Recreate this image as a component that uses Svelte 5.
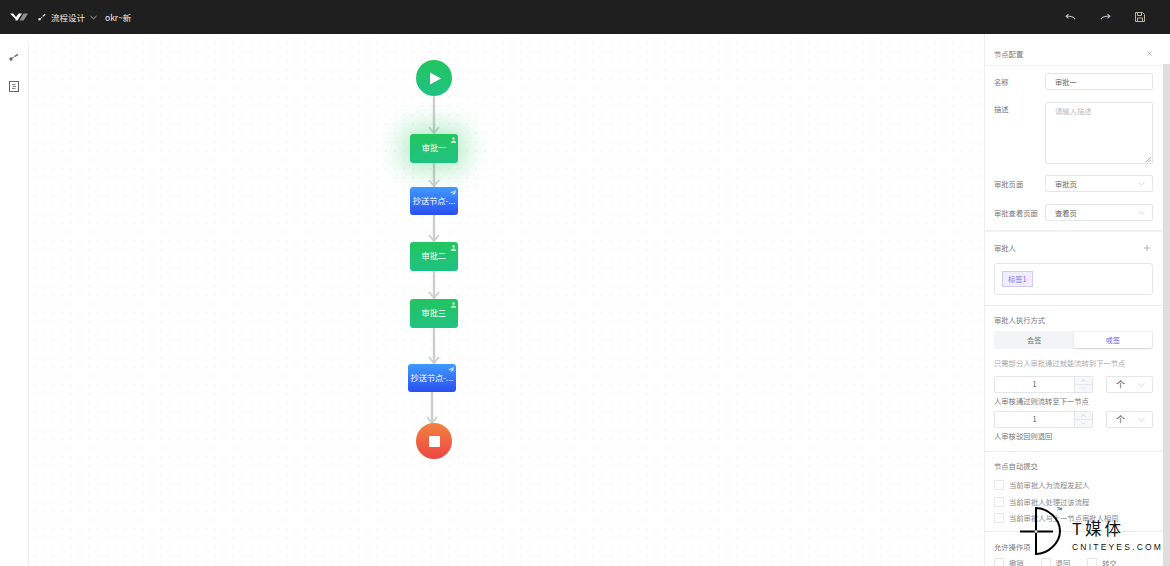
<script>
	const nodes = [
		{ label: '审批一', x: 410, y: 134, w: 48, h: 29, type: 'approve', glow: true },
		{ label: '抄送节点-...', x: 410, y: 187, w: 48, h: 28, type: 'copy' },
		{ label: '审批二', x: 409.5, y: 242, w: 48.5, h: 29, type: 'approve' },
		{ label: '审批三', x: 409.5, y: 299, w: 48.5, h: 29, type: 'approve' },
		{ label: '抄送节点-...', x: 407.5, y: 364, w: 48.5, h: 28, type: 'copy' }
	];

	const edges = [
		{ x: 434, y1: 96, y2: 134 },
		{ x: 434, y1: 163, y2: 187 },
		{ x: 434, y1: 215, y2: 242 },
		{ x: 434, y1: 271, y2: 299 },
		{ x: 434, y1: 328, y2: 364 },
		{ x: 432, y1: 392, y2: 424 }
	];

	const autoSubmit = ['当前审批人为流程发起人', '当前审批人处理过该流程', '当前审批人与上一节点审批人相同'];
	const actions = ['撤销', '退回', '转交'];
</script>

<div class="page">
	<header class="topbar">
		<svg class="logo" viewBox="0 0 18 8" width="18" height="8">
			<path d="M0 .5H3.200L6 4 7.300 2.300 8.800 .5H12L7.400 7.500H5.200L5.800 6.600z" fill="#fff" />
			<path d="M13.500 .5H18L13.600 7.500H9.400z" fill="#8f8f8f" />
		</svg>
		<svg class="flow-icon" viewBox="0 0 8 8" width="8" height="8">
			<path d="M2 5.800 4.600 3.800" stroke="#bbb" stroke-width="1" />
			<path d="M5 3.300 7.200 1.200" stroke="#ddd" stroke-width="1.400" />
			<circle cx="1.500" cy="6.300" r="1.200" fill="#ddd" />
		</svg>
		<span class="title">流程设计</span>
		<svg class="chev" viewBox="0 0 8 5" width="7" height="5">
			<path d="M.5.800 4 4 7.500.800" fill="none" stroke="#ccc" stroke-width=".9" />
		</svg>
		<span class="name">okr~新</span>
		<div class="actions">
			<svg viewBox="0 0 12 8" width="11" height="8">
				<path d="M11 6.500C9.500 3.500 6 2.800 1.500 3.300M3.800 1 1.200 3.300 3.800 5.500" fill="none" stroke="#b5bcc4" stroke-width="1.200" />
			</svg>
			<svg viewBox="0 0 12 8" width="11" height="8">
				<path d="M1 6.500C2.500 3.500 6 2.800 10.500 3.300M8.200 1l2.600 2.300-2.600 2.200" fill="none" stroke="#b5bcc4" stroke-width="1.200" />
			</svg>
			<svg viewBox="0 0 10 10" width="10" height="10">
				<path d="M.5.500H7.500L9.500 2.500V9.500H.5z" fill="none" stroke="#b9b5a0" stroke-width="1" />
				<path d="M2.500.500V3.500H6.500V.500M2.500 9.500V6H7.500V9.500" fill="none" stroke="#b9b5a0" stroke-width="1" />
			</svg>
		</div>
	</header>

	<div class="body">
		<aside class="rail">
			<svg viewBox="0 0 10 8" width="10" height="8">
				<path d="M2 5.800 5 4" stroke="#777" stroke-width="1" />
				<path d="M5.500 3.600 9 1.400" stroke="#666" stroke-width="1.500" />
				<circle cx="2" cy="6" r="1.700" fill="#666" />
			</svg>
			<svg viewBox="0 0 10 11" width="10" height="11">
				<rect x=".5" y=".5" width="9" height="10" fill="none" stroke="#666" />
				<path d="M3 3.500h3.500M3.500 5.500h3.500M3 7.500h3.500" stroke="#666" stroke-width=".8" />
			</svg>
		</aside>

		<main class="canvas">
			<svg class="edges" width="1170" height="566">
				{#each edges as e}
					<line x1={e.x} y1={e.y1} x2={e.x} y2={e.y2} stroke="#cdcdcd" stroke-width="2.400" />
					<path
						d="M{e.x - 5} {e.y2 - 7}L{e.x} {e.y2 - 1}L{e.x + 5} {e.y2 - 7}"
						fill="none"
						stroke="#cdcdcd"
						stroke-width="1.800"
					/>
				{/each}
			</svg>

			<div class="circle start">
				<svg viewBox="0 0 12 12" width="12" height="13"><path d="M1 0 12 6 1 12z" fill="#fff" /></svg>
			</div>

			{#each nodes as n}
				<div
					class="node {n.type}"
					class:glow={n.glow}
					style="left:{n.x - 29}px;top:{n.y - 34}px;width:{n.w}px;height:{n.h}px"
				>
					<span>{n.label}</span>
					{#if n.type === 'approve'}
						<svg class="badge" viewBox="0 0 6 7" width="5" height="6">
							<circle cx="3" cy="1.800" r="1.500" fill="#bfeed3" />
							<path d="M0 7V5.500L2 4h2l2 1.500V7z" fill="#bfeed3" />
						</svg>
					{:else}
						<svg class="badge" viewBox="0 0 7 6" width="6" height="5">
							<path d="M7 0 0 3l2 1 4-3-3 3.500V6l1.500-1.300L6 5.500z" fill="#cfe0ff" />
						</svg>
					{/if}
				</div>
			{/each}

			<div class="circle end"><i></i></div>
		</main>

		<section class="panel">
			<div class="panel-head">
				<span>节点配置</span>
				<svg viewBox="0 0 6 6" width="5" height="5">
					<path d="M.5.500l5 5M5.500.500l-5 5" stroke="#999" stroke-width=".8" />
				</svg>
			</div>

			<div class="group basic">
				<div class="row">
					<label>名称</label>
					<div class="field">审批一</div>
				</div>
				<div class="row top">
					<label>描述</label>
					<div class="field area">
						请输入描述
						<svg viewBox="0 0 6 6" width="5" height="5"><path d="M0 6 6 0M3 6l3-3" stroke="#777" stroke-width=".7" /></svg>
					</div>
				</div>
				<div class="row">
					<label>审批页面</label>
					<div class="field select">审批页<svg viewBox="0 0 8 5" width="7" height="4"><path d="M.5.500 4 4 7.500.500" fill="none" stroke="#bbb" stroke-width=".8" /></svg></div>
				</div>
				<div class="row">
					<label>审批查看页面</label>
					<div class="field select">查看页<svg viewBox="0 0 8 5" width="7" height="4"><path d="M.5.500 4 4 7.500.500" fill="none" stroke="#bbb" stroke-width=".8" /></svg></div>
				</div>
			</div>

			<div class="group approvers">
				<div class="group-title">
					<span>审批人</span>
					<svg viewBox="0 0 6 6" width="6" height="6"><path d="M3 0v6M0 3h6" stroke="#aaa" stroke-width=".9" /></svg>
				</div>
				<div class="tag-box"><span class="tag">标签1</span></div>
			</div>

			<div class="group mode">
				<div class="plain">审批人执行方式</div>
				<div class="segment">
					<span>会签</span>
					<span class="on">或签</span>
				</div>
				<div class="hint">只需部分人审批通过就能流转到下一节点</div>
				<div class="count">
					<div class="num">
						<span>1</span>
						<div class="steps">
							<i><svg viewBox="0 0 6 4" width="5" height="3"><path d="M.5 3.500 3 1l2.500 2.500" fill="none" stroke="#aaa" stroke-width=".7" /></svg></i>
							<i><svg viewBox="0 0 6 4" width="5" height="3"><path d="M.5.500 3 3 5.500.500" fill="none" stroke="#ccc" stroke-width=".7" /></svg></i>
						</div>
					</div>
					<div class="field unit">个<svg viewBox="0 0 8 5" width="7" height="4"><path d="M.5.500 4 4 7.500.500" fill="none" stroke="#bbb" stroke-width=".8" /></svg></div>
				</div>
				<div class="note">人审核通过则流转至下一节点</div>
				<div class="count second">
					<div class="num">
						<span>1</span>
						<div class="steps">
							<i><svg viewBox="0 0 6 4" width="5" height="3"><path d="M.5 3.500 3 1l2.500 2.500" fill="none" stroke="#aaa" stroke-width=".7" /></svg></i>
							<i><svg viewBox="0 0 6 4" width="5" height="3"><path d="M.5.500 3 3 5.500.500" fill="none" stroke="#ccc" stroke-width=".7" /></svg></i>
						</div>
					</div>
					<div class="field unit">个<svg viewBox="0 0 8 5" width="7" height="4"><path d="M.5.500 4 4 7.500.500" fill="none" stroke="#bbb" stroke-width=".8" /></svg></div>
				</div>
				<div class="note">人审核驳回则退回</div>
			</div>

			<div class="group auto">
				<div class="plain">节点自动提交</div>
				{#each autoSubmit as item}
					<div class="check"><i></i>{item}</div>
				{/each}
			</div>

			<div class="group allow">
				<div class="plain">允许操作项</div>
				<div class="check-row">
					{#each actions as item}
						<div class="check"><i></i>{item}</div>
					{/each}
				</div>
			</div>

			<div class="scrollbar"></div>
		</section>
	</div>

	<div class="watermark">
		<svg class="mark" viewBox="0 0 44 52" width="44" height="52">
			<path d="M17 3V49C29 49 41 38 41 26S29 3 17 3z" fill="none" stroke="#000" stroke-width="2" />
			<path d="M1 26.500H34" stroke="#000" stroke-width="2" />
			<circle cx="17" cy="26.500" r="1.300" fill="#fff" />
		</svg>
		<span class="tm">™</span>
		<div class="wm-text">
			<span class="wm-big">T媒体</span>
			<span class="wm-small">CNITEYES.COM</span>
		</div>
	</div>
</div>

<style>
	:global(body) {
		background: #fff;
	}

	.page {
		position: relative;
		width: 1170px;
		height: 566px;
		overflow: hidden;
		font-family: 'Noto Sans CJK SC', 'Noto Sans', sans-serif;
		color: #777;
	}

	/* ----- top bar ----- */
	.topbar {
		display: flex;
		align-items: center;
		height: 34px;
		padding: 0 25px 0 10px;
		box-sizing: border-box;
		background: #1f1f1f;
		color: #e6e6e6;
	}

	.logo {
		margin-right: 10px;
	}

	.flow-icon {
		margin-right: 5px;
	}

	.title {
		font-size: 8.500px;
		margin-right: 5px;
	}

	.chev {
		margin-right: 8px;
	}

	.name {
		font-size: 8.500px;
		color: #eeeeee;
	}

	.actions {
		display: flex;
		align-items: center;
		gap: 24px;
		margin-left: auto;
	}

	/* ----- layout ----- */
	.body {
		display: flex;
		height: 532px;
	}

	.rail {
		display: flex;
		flex-direction: column;
		align-items: center;
		flex: none;
		gap: 20px;
		width: 29px;
		padding-top: 10px;
		box-sizing: border-box;
		border-right: 1px solid #eee;
		margin-top: 9px;
	}

	.canvas {
		position: relative;
		flex: 1;
		background-color: #fff;
		background-image: radial-gradient(circle, #e2e2e2 0.6px, transparent 0.9px);
		background-size: 9px 9px;
		background-position: 1.500px 4.500px;
	}

	.edges {
		position: absolute;
		left: -29px;
		top: -34px;
	}

	.circle {
		position: absolute;
		left: 387px;
		width: 36px;
		height: 36px;
		border-radius: 50%;
		display: flex;
		align-items: center;
		justify-content: center;
	}

	.start {
		top: 26px;
		background: linear-gradient(#22c55e, #20c283);
	}

	.start svg {
		margin-left: 2px;
	}

	.end {
		top: 389px;
		background: linear-gradient(#f0843f, #ef4444);
	}

	.end i {
		width: 11px;
		height: 11px;
		background: #fff;
		border-radius: 1px;
	}

	.node {
		position: absolute;
		display: flex;
		align-items: center;
		justify-content: center;
		padding-bottom: 3px;
		box-sizing: border-box;
		border-radius: 3px;
		color: #fff;
		font-size: 8.200px;
		white-space: nowrap;
	}

	.approve {
		background: linear-gradient(#22c55e, #20c283);
	}

	.copy {
		background: linear-gradient(#3f9bff, #2a4ff0);
	}

	.glow {
		box-shadow: 0 0 24px 8px rgba(34, 197, 94, 0.32);
	}

	.badge {
		position: absolute;
		top: 3px;
		right: 2.500px;
	}

	/* ----- config panel ----- */
	.panel {
		position: relative;
		flex: none;
		width: 186px;
		height: 532px;
		overflow: hidden;
		box-sizing: border-box;
		padding-right: 7px;
		background: #fff;
		border-left: 1px solid #eee;
		font-size: 7.300px;
	}

	.scrollbar {
		position: absolute;
		top: 30px;
		right: 0;
		bottom: 0;
		width: 7px;
		background: #dedede;
	}

	.panel-head {
		display: flex;
		align-items: center;
		justify-content: space-between;
		height: 32px;
		padding: 8px 11px 0 9px;
		box-sizing: border-box;
		border-bottom: 1px solid #eef0f3;
	}

	.group {
		padding: 0 10px 0 9px;
		border-bottom: 1px solid #e9ebf0;
	}

	.basic {
		display: flex;
		flex-direction: column;
		height: 166px;
		padding-top: 7px;
		box-sizing: border-box;
		border-bottom-width: 2px;
		border-bottom-color: #f0f1f4;
	}

	.row {
		display: flex;
		align-items: center;
		margin-bottom: 12px;
	}

	.row.top {
		align-items: flex-start;
		margin-bottom: 11px;
	}

	.row label {
		flex: none;
		width: 51px;
		color: #777;
	}

	.row.top label {
		padding-top: 2px;
	}

	.field {
		display: flex;
		align-items: center;
		justify-content: space-between;
		flex: 1;
		height: 17px;
		padding: 0 7px 0 9px;
		box-sizing: border-box;
		border: 1px solid #e4e6eb;
		border-radius: 2px;
		color: #666;
		background: #fff;
	}

	.area {
		position: relative;
		align-items: flex-start;
		height: 62px;
		padding-top: 3px;
		color: #bbb;
	}

	.area svg {
		position: absolute;
		right: 1px;
		bottom: 1px;
	}

	.approvers {
		height: 74px;
		box-sizing: border-box;
	}

	.group-title {
		display: flex;
		align-items: center;
		justify-content: space-between;
		height: 31px;
		padding-right: 3px;
	}

	.tag-box {
		height: 32px;
		padding: 7px;
		box-sizing: border-box;
		border: 1px solid #e4e6eb;
		border-radius: 3px;
	}

	.tag {
		display: inline-block;
		height: 16px;
		padding: 0 5px;
		box-sizing: border-box;
		line-height: 14px;
		color: #7f77e8;
		background: #efedff;
		border: 1px solid #cfcbfa;
	}

	.mode {
		height: 146px;
		box-sizing: border-box;
		padding-top: 9px;
	}

	.plain {
		height: 11px;
		line-height: 11px;
	}

	.segment {
		display: flex;
		height: 18px;
		margin-top: 5px;
		padding: 1px;
		box-sizing: border-box;
		background: #f3f4f6;
		border-radius: 2px;
	}

	.segment span {
		flex: 1;
		display: flex;
		align-items: center;
		justify-content: center;
	}

	.segment .on {
		background: #fff;
		color: #6b63e6;
		border-radius: 2px;
		box-shadow: 0 1px 2px rgba(0, 0, 0, 0.15);
	}

	.hint {
		margin-top: 8px;
		height: 12px;
		line-height: 12px;
		color: #aaa;
	}

	.count {
		display: flex;
		justify-content: space-between;
		margin-top: 7px;
	}

	.count.second {
		margin-top: 4px;
	}

	.num {
		display: flex;
		width: 99px;
		height: 17px;
		box-sizing: border-box;
		border: 1px solid #e4e6eb;
		border-radius: 2px;
	}

	.num span {
		flex: 1;
		text-align: center;
		line-height: 15px;
		color: #555;
	}

	.steps {
		display: flex;
		flex-direction: column;
		width: 17px;
		background: #f7f8fa;
		border-left: 1px solid #e4e6eb;
	}

	.steps i {
		flex: 1;
		display: flex;
		align-items: center;
		justify-content: center;
	}

	.steps i + i {
		border-top: 1px solid #e4e6eb;
	}

	.unit {
		flex: none;
		width: 47px;
		padding: 0 7px 0 9px;
		font-size: 9px;
		color: #555;
	}

	.note {
		margin-top: 2px;
		height: 12px;
		line-height: 12px;
	}

	.auto {
		height: 80px;
		box-sizing: border-box;
		padding-top: 9px;
	}

	.check {
		display: flex;
		align-items: center;
		height: 16.500px;
		color: #888;
	}

	.auto .plain {
		margin-bottom: 5px;
	}

	.check i {
		flex: none;
		width: 8px;
		height: 8px;
		margin-right: 5px;
		border: 1px solid #e4e6eb;
		border-radius: 1px;
	}

	.allow {
		padding-top: 10px;
		border-bottom: 0;
	}

	.check-row {
		display: flex;
		gap: 17px;
		margin-top: 2px;
	}

	/* ----- watermark, sits over the panel ----- */
	.watermark {
		position: absolute;
		left: 1019px;
		top: 505px;
		display: flex;
	}

	.tm {
		position: absolute;
		left: 38px;
		top: 0;
		font-size: 7px;
		color: #222;
	}

	.wm-text {
		display: flex;
		flex-direction: column;
		margin: 11px 0 0 9px;
	}

	.wm-big {
		font-size: 16.500px;
		line-height: 25px;
		color: #111;
		letter-spacing: 3px;
	}

	.wm-small {
		font-family: 'Liberation Sans', sans-serif;
		font-size: 8.500px;
		line-height: 10px;
		margin-top: 1px;
		color: #111;
		letter-spacing: 2.200px;
		white-space: nowrap;
	}
</style>
